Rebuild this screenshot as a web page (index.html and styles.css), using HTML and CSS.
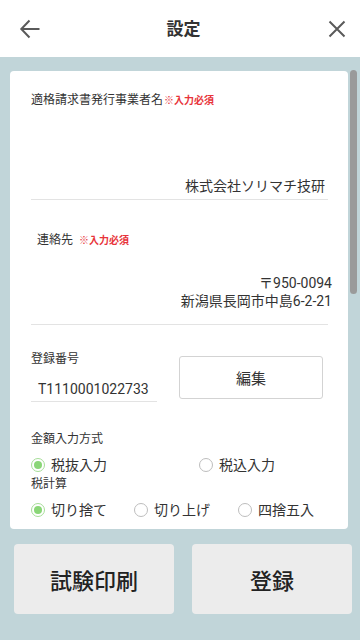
FILE: index.html
```html
<!DOCTYPE html>
<html lang="ja">
<head>
<meta charset="utf-8">
<title>設定</title>
<link rel="stylesheet" href="styles.css">
</head>
<body>
<div class="app">
  <header class="header">
    <svg class="icon" viewBox="0 0 24 24" width="24" height="24"><path d="M21.5 12H3.8M11.5 3.5L3.3 12L11.5 20.5" fill="none" stroke="#5a5a5a" stroke-width="2"/></svg>
    <h1 class="title">設定</h1>
    <svg class="icon" viewBox="0 0 24 24" width="24" height="24"><path d="M4.5 4.5L19.5 19.5M19.5 4.5L4.5 19.5" fill="none" stroke="#5a5a5a" stroke-width="2"/></svg>
  </header>
  <main class="main">
    <section class="card">
      <div class="label">適格請求書発行事業者名<span class="req req-tight">※入力必須</span></div>
      <div class="value name">株式会社ソリマチ技研</div>
      <div class="label label-indent label-contact">連絡先<span class="req">※入力必須</span></div>
      <div class="value address">
        <div class="addr-line">〒950-0094</div>
        <div class="addr-line">新潟県長岡市中島6-2-21</div>
      </div>
      <div class="reg-row">
        <div class="reg-col">
          <div class="label">登録番号</div>
          <div class="value reg-no">T1110001022733</div>
        </div>
        <div class="edit-btn">編集</div>
      </div>
      <div class="label label-amount">金額入力方式</div>
      <div class="radios radios-two">
        <div class="radio-item"><span class="radio on"></span>税抜入力</div>
        <div class="radio-item"><span class="radio"></span>税込入力</div>
      </div>
      <div class="label label-tax">税計算</div>
      <div class="radios radios-three">
        <div class="radio-item"><span class="radio on"></span>切り捨て</div>
        <div class="radio-item"><span class="radio"></span>切り上げ</div>
        <div class="radio-item"><span class="radio"></span>四捨五入</div>
      </div>
    </section>
    <div class="scroll-thumb"></div>
  </main>
  <footer class="footer">
    <div class="big-btn">試験印刷</div>
    <div class="big-btn">登録</div>
  </footer>
</div>
</body>
</html>
```
FILE: styles.css
```css
* { box-sizing: border-box; }
html, body { margin: 0; padding: 0; }
body {
  font-family: Roboto, "Noto Sans CJK JP", sans-serif;
  color: #333;
  background: #c1d5d9;
}
.app {
  width: 360px;
  height: 640px;
  display: flex;
  flex-direction: column;
  background: #c1d5d9;
}
.header {
  height: 57px;
  flex-shrink: 0;
  background: #fff;
  display: flex;
  align-items: center;
  justify-content: space-between;
  padding: 0 11px 0 18px;
}
.icon { display: block; }
.title {
  margin: 0;
  font-size: 17px;
  font-weight: 700;
  color: #333;
  line-height: 24px;
}
.main {
  display: flex;
  padding: 14px 3px 0 10px;
}
.card {
  flex: 1;
  height: 458px;
  background: #fff;
  border-radius: 4px;
  overflow: hidden;
  padding: 21px 20px 0 21px;
}
.scroll-thumb {
  width: 7px;
  height: 224px;
  margin-left: 2px;
  margin-top: -1px;
  background: #9a9a9a;
  border-radius: 4px;
}
.label {
  font-size: 12px;
  line-height: 16px;
  height: 16px;
  color: #333;
  white-space: nowrap;
}
.req {
  color: #e8343a;
  font-size: 10px;
  font-weight: 700;
  margin-left: 6px;
}
.req-tight { margin-left: 1px; }
.label-indent { padding-left: 6px; }
.value {
  font-size: 14px;
  line-height: 20px;
  color: #333;
}
.name {
  margin-top: 68px;
  height: 24px;
  text-align: right;
  padding: 0 3px 3px 0;
  border-bottom: 1px solid #e3e3e3;
}
.label-contact { margin-top: 32px; }
.address {
  margin-top: 26px;
  height: 51px;
  text-align: right;
  padding-bottom: 14px;
  border-bottom: 1px solid #e3e3e3;
}
.addr-line {
  height: 18px;
  line-height: 18px;
  margin-right: -4px;
}
.reg-row {
  display: flex;
  gap: 22px;
  margin-top: 26px;
}
.reg-col { width: 126px; }
.reg-no {
  margin-top: 12px;
  height: 23px;
  padding: 0 0 2px 7px;
  border-bottom: 1px solid #e3e3e3;
}
.edit-btn {
  width: 144px;
  height: 43px;
  margin-top: 5px;
  border: 1px solid #d3d3d3;
  border-radius: 3px;
  display: flex;
  align-items: center;
  justify-content: center;
  font-size: 15px;
  color: #333;
}
.label-amount { margin-top: 29px; }
.label-tax { margin-top: 1px; }
.radios {
  display: flex;
  margin-top: 8px;
  height: 20px;
}
.radio-item {
  display: flex;
  align-items: center;
  gap: 6px;
  height: 20px;
  font-size: 14px;
  line-height: 20px;
  color: #333;
}
.radios-two .radio-item:first-child { width: 168px; }
.radios-three .radio-item:nth-child(1) { width: 103px; }
.radios-three .radio-item:nth-child(2) { width: 104px; }
.radio {
  width: 14px;
  height: 14px;
  border-radius: 50%;
  border: 1px solid #bdbdbd;
  background: #fff;
  display: flex;
  align-items: center;
  justify-content: center;
  flex-shrink: 0;
}
.radio.on { border: 1.5px solid #a6dd98; }
.radio.on::after {
  content: "";
  width: 8px;
  height: 8px;
  border-radius: 50%;
  background: #8ad677;
}
.footer {
  display: flex;
  gap: 18px;
  padding: 15px 8px 0 14px;
}
.big-btn {
  width: 160px;
  height: 70px;
  background: #ececec;
  border-radius: 4px;
  display: flex;
  align-items: center;
  justify-content: center;
  font-size: 22px;
  font-weight: 500;
  color: #222;
}
```
